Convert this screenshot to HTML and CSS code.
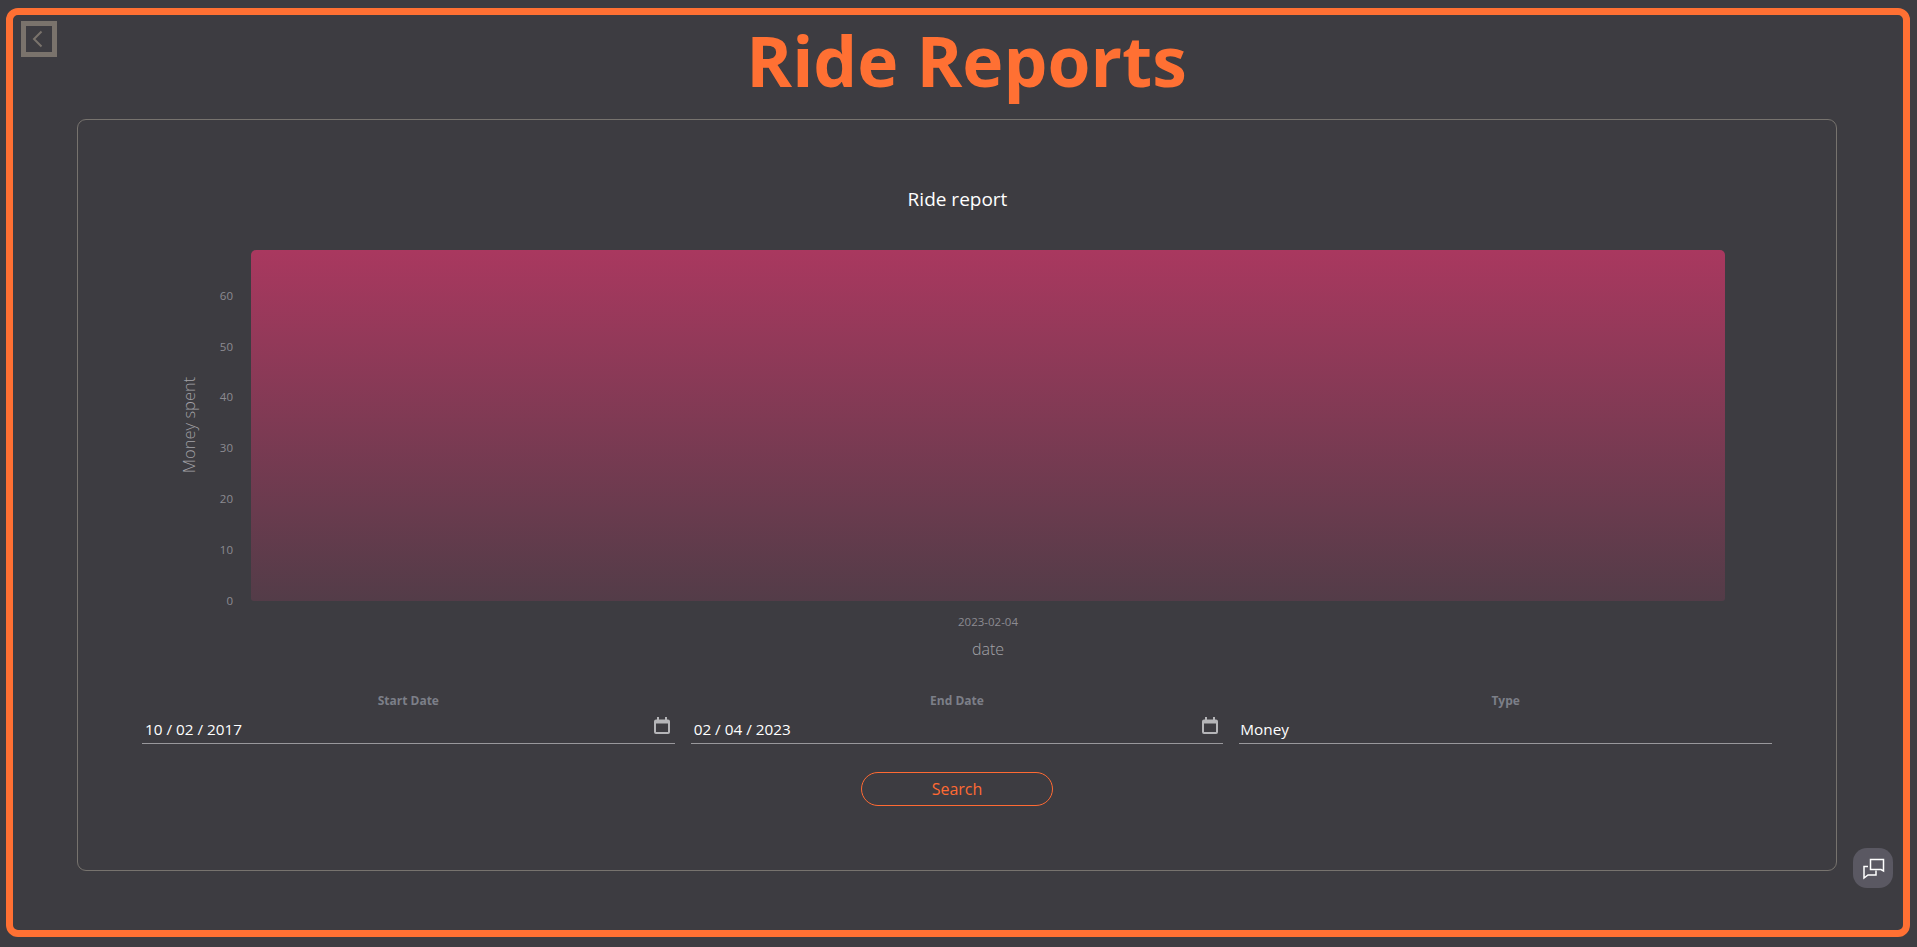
FILE: index.html
```html
<!DOCTYPE html>
<html lang="en">
<head>
<meta charset="utf-8">
<title>Ride Reports</title>
<link rel="stylesheet" href="styles.css">
</head>
<body>
<main class="frame">
  <a class="back" aria-label="Back">
    <svg class="back-icon" viewBox="0 0 26 26"><path d="M15.5 5.5 8 13l7.5 7.5"/></svg>
  </a>
  <h1 class="page-title">Ride Reports</h1>
  <section class="card">
    <svg class="chart" viewBox="78 120 1758 560" role="img" aria-label="Ride report chart">
      <defs>
        <linearGradient id="barFill" x1="0" y1="0" x2="0" y2="1">
          <stop offset="0" stop-color="#a9385f"/>
          <stop offset="1" stop-color="#533c48"/>
        </linearGradient>
      </defs>
      <text class="chart-title" x="957.5" y="206">Ride report</text>
      <path fill="url(#barFill)" d="M251 255a5 5 0 0 1 5-5h1464a5 5 0 0 1 5 5v343a3 3 0 0 1-3 3H254a3 3 0 0 1-3-3z"/>
      <text class="tick tick-y" x="233" y="300">60</text>
      <text class="tick tick-y" x="233" y="351">50</text>
      <text class="tick tick-y" x="233" y="401">40</text>
      <text class="tick tick-y" x="233" y="452">30</text>
      <text class="tick tick-y" x="233" y="503">20</text>
      <text class="tick tick-y" x="233" y="554">10</text>
      <text class="tick tick-y" x="233" y="605">0</text>
      <text class="tick tick-x" x="988" y="626">2023-02-04</text>
      <text class="axis-title axis-x" x="988" y="655">date</text>
      <text class="axis-title axis-y" transform="translate(195 425) rotate(-90)">Money spent</text>
    </svg>
    <div class="filters">
      <div class="field">
        <span class="field-label">Start Date</span>
        <div class="field-control field-date">
          <span class="field-value">10 / 02 / 2017</span>
          <svg class="cal" viewBox="0 0 16 17"><path class="cal-line" d="M1 6v9a1 1 0 0 0 1 1h12a1 1 0 0 0 1-1V6"/><path class="cal-solid" d="M0 6.500V4.500A2 2 0 0 1 2 2.500h1V0h2v2.500h6V0h2v2.500h1a2 2 0 0 1 2 2v2z"/></svg>
        </div>
      </div>
      <div class="field">
        <span class="field-label">End Date</span>
        <div class="field-control field-date">
          <span class="field-value">02 / 04 / 2023</span>
          <svg class="cal" viewBox="0 0 16 17"><path class="cal-line" d="M1 6v9a1 1 0 0 0 1 1h12a1 1 0 0 0 1-1V6"/><path class="cal-solid" d="M0 6.500V4.500A2 2 0 0 1 2 2.500h1V0h2v2.500h6V0h2v2.500h1a2 2 0 0 1 2 2v2z"/></svg>
        </div>
      </div>
      <div class="field">
        <span class="field-label">Type</span>
        <div class="field-control">
          <span class="field-value">Money</span>
        </div>
      </div>
    </div>
    <button class="search" type="button">Search</button>
  </section>
  <button class="chat" type="button" aria-label="Chat">
    <svg class="chat-icon" viewBox="0 0 40 40"><path d="M17.500 11.500h13V23l-2.500-1.500H17.500z"/><path d="M15 18.500h-4V30l4-3h8v-4.500"/></svg>
  </button>
</main>
</body>
</html>
```
FILE: styles.css
```css
* { box-sizing: border-box; }
html, body { margin: 0; height: 100%; }
body {
  background: #3d3c41;
  font-family: "Open Sans", "Noto Sans", sans-serif;
  overflow: hidden;
}
.frame {
  position: relative;
  width: 1904px;
  height: 929px;
  margin: 8px 0 0 6px;
  border: 7px solid #ff7033;
  border-radius: 12px;
  display: flex;
  flex-direction: column;
  padding: 0 66px 0 64px;
}
.back {
  position: absolute;
  left: 8px;
  top: 6px;
  width: 36px;
  height: 36px;
  border: 5px solid #7a736c;
  display: block;
}
.back-icon { display: block; width: 26px; height: 26px; fill: none; stroke: #7a736c; stroke-width: 2; }
.page-title {
  margin: 0;
  height: 104px;
  padding-left: 19px;
  text-align: center;
  color: #ff7033;
  font-size: 69.5px;
  font-weight: 700;
  line-height: 90px;
}
.card {
  height: 752px;
  border: 1px solid #77736e;
  border-radius: 9px;
  display: flex;
  flex-direction: column;
  align-items: center;
}
.chart { display: block; width: 1758px; height: 560px; flex: none; }
.chart-title { fill: #fff; font-size: 19px; text-anchor: middle; }
.tick { fill: #8c8b91; font-size: 11.5px; }
.tick-y { text-anchor: end; }
.tick-x { text-anchor: middle; }
.axis-title { fill: #a3a2a7; font-size: 16.500px; font-weight: 300; text-anchor: middle; }
.axis-x { font-size: 16px; }
.filters {
  width: 100%;
  padding: 0 64px;
  margin-top: 13px;
  display: grid;
  grid-template-columns: repeat(3, 1fr);
  gap: 16px;
}
.field { display: flex; flex-direction: column; align-items: stretch; }
.field-label {
  color: #7c7f88;
  font-size: 12px;
  font-weight: 700;
  line-height: 16px;
  text-align: center;
}
.field-control {
  height: 34px;
  margin-top: 1px;
  border-bottom: 1px solid #99989c;
  display: flex;
  align-items: center;
  justify-content: space-between;
  padding: 0 5px 0 1px;
}
.field-date { padding-left: 3px; }
.field-value { color: #fff; font-size: 15.300px; line-height: 22px; margin-top: 4px; }
.cal { width: 16px; height: 17px; margin-top: -3px; flex: none; }
.cal-line { fill: none; stroke: #b5b5b8; stroke-width: 2; }
.cal-solid { fill: #b5b5b8; }
.search {
  width: 192px;
  height: 34px;
  margin-top: 28px;
  border: 1px solid #ff6a33;
  border-radius: 17px;
  background: transparent;
  color: #ff6a33;
  font-family: inherit;
  font-size: 16px;
  padding: 0;
}
.chat {
  position: absolute;
  left: 1840px;
  top: 833px;
  width: 40px;
  height: 40px;
  padding: 0;
  border: 0;
  border-radius: 14px;
  background: #5a5862;
}
.chat-icon { display: block; width: 40px; height: 40px; fill: none; stroke: #fff; stroke-width: 1.500; }
```
